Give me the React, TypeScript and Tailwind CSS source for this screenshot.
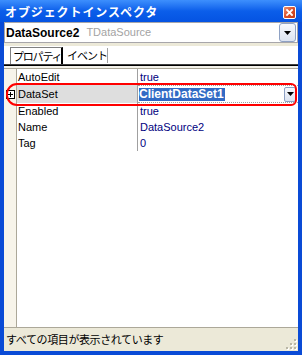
import React from "react";

const rows = [
  { name: "AutoEdit", value: "true", h: "h-[16px]" },
  { name: "DataSet", value: "ClientDataSet1", h: "h-[18px]", selected: true },
  { name: "Enabled", value: "true", h: "h-[16px]" },
  { name: "Name", value: "DataSource2", h: "h-[16px]" },
  { name: "Tag", value: "0", h: "h-[16px]" },
];

function DropArrow() {
  return (
    <svg width="7" height="4" viewBox="0 0 7 4">
      <path d="M0 0h7L3.5 4z" fill="#000" />
    </svg>
  );
}

function SizeGrip() {
  const dots = [
    [8, 0],
    [4, 4],
    [8, 4],
    [0, 8],
    [4, 8],
    [8, 8],
  ];
  return (
    <svg width="11" height="11" viewBox="0 0 11 11">
      {dots.map(([x, y], i) => (
        <g key={i}>
          <rect x={x + 1} y={y + 1} width="2" height="2" fill="#ffffff" />
          <rect x={x} y={y} width="2" height="2" fill="#b9b6a6" />
        </g>
      ))}
    </svg>
  );
}

export default function App() {
  return (
    <div className="relative w-[302px] h-[355px] flex flex-col bg-[#0a4bd6] font-['Liberation_Sans','Noto_Sans_CJK_JP',sans-serif] text-[11px] text-black overflow-hidden">
      {/* title bar */}
      <div className="h-[22px] shrink-0 flex items-center justify-between pl-[5px] pr-[6px] pt-[2px] bg-linear-to-b from-[#3d8ffd] via-[#0b5eea] to-[#0553e2]">
        <span className="text-white font-bold text-[12px] tracking-[0.9px] leading-none whitespace-nowrap font-['Noto_Sans_CJK_JP',sans-serif]">
          オブジェクトインスペクタ
        </span>
        <div className="w-[13px] h-[13px] rounded-[2px] border border-white bg-linear-to-br from-[#e9906f] via-[#d9502b] to-[#c23c16] flex items-center justify-center">
          <svg width="7" height="7" viewBox="0 0 7 7">
            <path d="M1 1l5 5M6 1L1 6" stroke="#fff" strokeWidth="1.8" strokeLinecap="square" />
          </svg>
        </div>
      </div>

      {/* client area */}
      <div className="flex-1 mx-[4px] mb-[4px] flex flex-col bg-[#ece9d8]">
        {/* component selector */}
        <div className="h-[21px] shrink-0 flex items-center bg-white border border-[#a7a6aa] pl-[1px]">
          <span className="font-bold text-[12px] leading-none">DataSource2</span>
          <span className="ml-[7px] text-[11px] text-[#a3a3a3] leading-none">TDataSource</span>
          <div className="ml-auto mr-[1px] w-[17px] h-[19px] rounded-[3px] border border-[#8ea1c4] bg-linear-to-b from-[#f7f9fe] to-[#dce3f0] flex items-center justify-center">
            <DropArrow />
          </div>
        </div>
        <div className="h-[3px] shrink-0" />

        {/* tabs */}
        <div className="h-[18px] shrink-0 bg-white flex items-end pl-[6px]">
          <div className="h-[17px] w-[53px] border-l border-t border-[#808080] border-r-2 border-r-black bg-white pl-[2px] flex items-center whitespace-nowrap text-[11px] tracking-[-1.2px] font-['Noto_Sans_CJK_JP',sans-serif] leading-none">
            プロパティ
          </div>
          <div className="h-[15px] w-[45px] pl-[4px] mb-[1px] flex items-center whitespace-nowrap text-[11px] tracking-[-1px] font-['Noto_Sans_CJK_JP',sans-serif] leading-none border-r border-[#a0a0a0]">
            イベント
          </div>
        </div>
        <div className="h-[1px] shrink-0 bg-[#404040]" />
        <div className="h-[1px] shrink-0 bg-black" />
        <div className="h-[2px] shrink-0 bg-[#f4f2ea]" />
        <div className="h-[1px] shrink-0 bg-[#aca899]" />

        {/* property grid */}
        <div className="flex-1 flex flex-col bg-white">
          {rows.map((r) => (
            <div key={r.name} className={`flex ${r.h}`}>
              <div className="w-[13px] shrink-0 bg-[#f7f4ea] border-r border-[#aca899] relative flex items-center justify-center">
                {r.selected && (
                  <div className="w-[9px] h-[9px] border border-black bg-white flex items-center justify-center">
                    <svg width="5" height="5" viewBox="0 0 5 5">
                      <path d="M0 2.5h5M2.5 0v5" stroke="#000" strokeWidth="1" />
                    </svg>
                  </div>
                )}
              </div>
              <div
                className={`w-[121px] shrink-0 border-r border-[#a0a0a0] pl-[1px] flex items-center leading-none ${
                  r.selected ? "bg-[#dedede]" : ""
                }`}
              >
                {r.name}
              </div>
              {r.selected ? (
                <div className="flex-1 flex items-center border-y border-dotted border-[#a0a0a0] pl-[1px]">
                  <span className="bg-[#316ac5] text-white font-bold text-[12px] leading-[13px] pr-[1px]">
                    {r.value}
                  </span>
                  <div className="ml-auto mr-[2px] w-[12px] h-[15px] rounded-[2px] border border-[#8ea1c4] bg-linear-to-b from-[#f7f9fe] to-[#dce3f0] flex items-center justify-center">
                    <DropArrow />
                  </div>
                </div>
              ) : (
                <div className="flex-1 flex items-center pl-[2px] text-[#000080] leading-none">{r.value}</div>
              )}
            </div>
          ))}
          <div className="flex-1 flex">
            <div className="w-[13px] shrink-0 bg-[#f7f4ea] border-r border-[#aca899]" />
          </div>
        </div>

        {/* status bar */}
        <div className="h-[1px] shrink-0 bg-[#aca899]" />
        <div className="h-[23px] shrink-0 flex items-center pl-[2px] relative">
          <span className="text-[11px] tracking-[-0.4px] leading-none whitespace-nowrap font-['Noto_Sans_CJK_JP',sans-serif]">
            すべての項目が表示されています
          </span>
          <div className="absolute right-[1px] bottom-[1px]">
            <SizeGrip />
          </div>
        </div>
      </div>

      {/* red annotation */}
      <div className="absolute left-[6px] top-[83px] w-[291px] h-[23px] border-2 border-[#ff0000] rounded-l-[11px] rounded-r-[6px] pointer-events-none" />
    </div>
  );
}
